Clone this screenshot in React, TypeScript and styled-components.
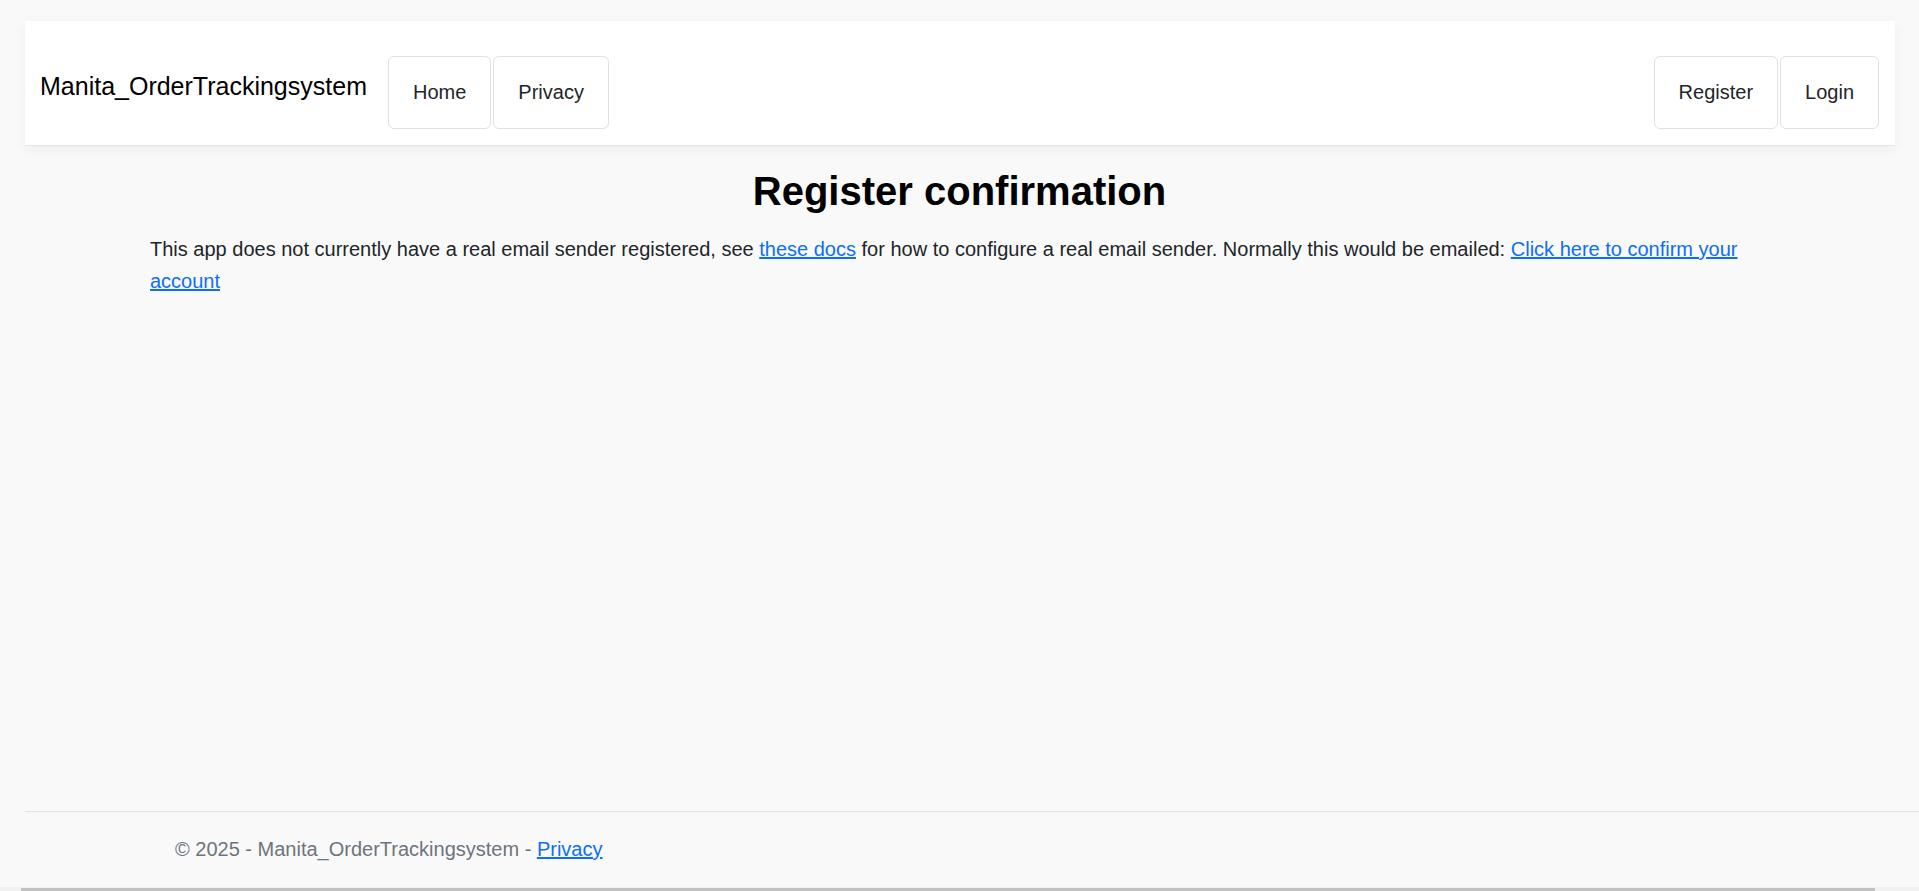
import React from "react";
import styled, { createGlobalStyle } from "styled-components";

const GlobalStyle = createGlobalStyle`
  html, body {
    margin: 0;
    padding: 0;
    background: #f9f9f9;
    font-family: "Liberation Sans", Arial, sans-serif;
    color: #212529;
    overflow: hidden;
  }
  * { box-sizing: border-box; }
`;

const Page = styled.div`
  height: 891px;
  display: flex;
  flex-direction: column;
  padding: 21px 24px 0 25px;
`;

const Navbar = styled.header`
  display: flex;
  align-items: center;
  padding: 35px 16px 16px 15px;
  background: #ffffff;
  border-bottom: 1px solid #e3e4ec;
  box-shadow: 0 4px 12px rgba(0, 0, 0, 0.05);
`;

const Brand = styled.a`
  font-size: 25px;
  line-height: 29px;
  color: #000;
  text-decoration: none;
  margin: 0 21px 12px 0;
  white-space: nowrap;
`;

const NavGroup = styled.nav<{ $end?: boolean }>`
  display: flex;
  gap: 2px;
  margin-left: ${(p) => (p.$end ? "auto" : "0")};
`;

const NavLink = styled.a`
  display: block;
  padding: 24px;
  font-size: 20px;
  line-height: 23px;
  color: #212529;
  text-decoration: none;
  background: #fff;
  border: 1px solid #dee2e6;
  border-radius: 6px;
`;

const Main = styled.main`
  flex: 1;
  padding: 0 126px 0 125px;
`;

const Title = styled.h1`
  margin: 21px 0 19px;
  font-size: 40px;
  line-height: 48px;
  font-weight: 700;
  text-align: center;
  color: #000;
`;

const Text = styled.p`
  margin: 0;
  font-size: 20px;
  line-height: 31.5px;
  color: #212529;
`;

const Link = styled.a`
  color: #0d6efd;
  text-decoration: underline;
`;

const Footer = styled.footer`
  margin-right: -24px;
  border-top: 1px solid #dee2e6;
  padding: 22px 0 27px 150px;
  font-size: 20px;
  line-height: 30px;
  color: #6c757d;
`;

const ScrollTrack = styled.div`
  position: fixed;
  left: 0;
  right: 0;
  bottom: 0;
  height: 4px;
  background: #f1f1f1;
`;

const ScrollThumb = styled.div`
  position: absolute;
  left: 21px;
  width: 1854px;
  top: 1px;
  bottom: 0;
  background: #c1c1c1;
`;

export default function App() {
  return (
    <>
      <GlobalStyle />
      <Page>
        <Navbar>
          <Brand href="#">Manita_OrderTrackingsystem</Brand>
          <NavGroup>
            <NavLink href="#">Home</NavLink>
            <NavLink href="#">Privacy</NavLink>
          </NavGroup>
          <NavGroup $end>
            <NavLink href="#">Register</NavLink>
            <NavLink href="#">Login</NavLink>
          </NavGroup>
        </Navbar>
        <Main>
          <Title>Register confirmation</Title>
          <Text>
            This app does not currently have a real email sender registered, see{" "}
            <Link href="#">these docs</Link> for how to configure a real email sender.
            Normally this would be emailed:{" "}
            <Link href="#">Click here to confirm your account</Link>
          </Text>
        </Main>
        <Footer>
          © 2025 - Manita_OrderTrackingsystem - <Link href="#">Privacy</Link>
        </Footer>
      </Page>
      <ScrollTrack>
        <ScrollThumb />
      </ScrollTrack>
    </>
  );
}
